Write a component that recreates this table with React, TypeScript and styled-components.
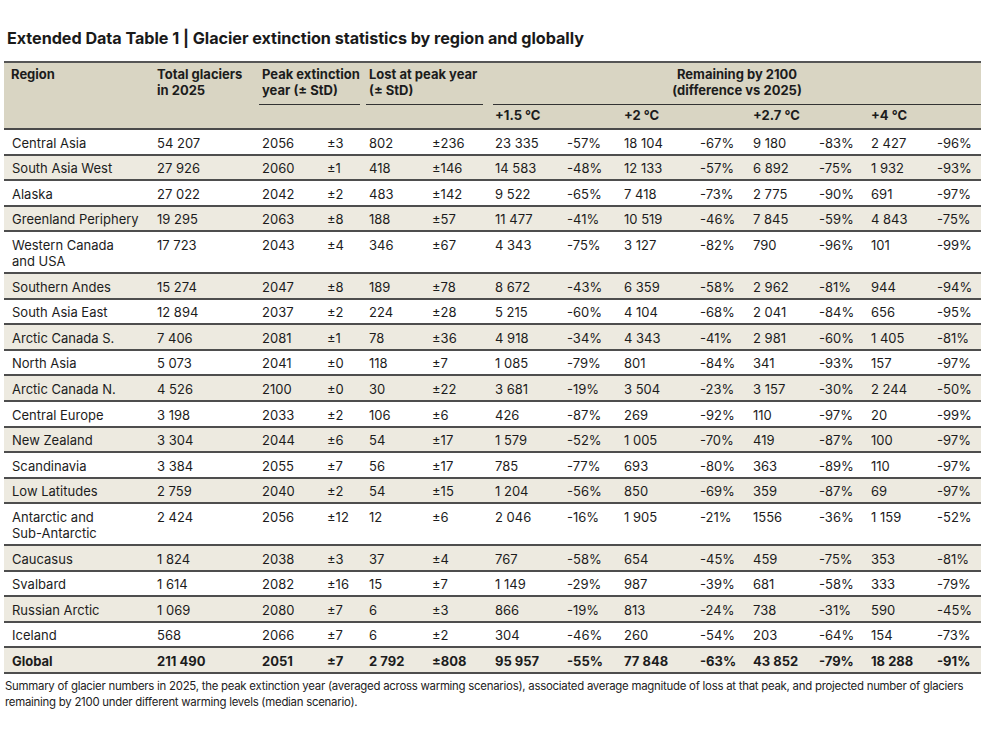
import React from "react";
import styled, { createGlobalStyle } from "styled-components";

const Global = createGlobalStyle`
  html, body { margin: 0; padding: 0; background: #ffffff; }
  body { font-family: Inter, "Noto Sans", Arial, sans-serif; color: #1c1c1c; }
`;

const Page = styled.div`
  width: 986px;
  padding: 28px 5px 0 4px;
  box-sizing: border-box;
`;

const Title = styled.h1`
  margin: 0 0 13px 3px;
  font-size: 16.2px;
  line-height: 20px;
  font-weight: 700;
  letter-spacing: -0.05px;
  color: #1a1a1a;
`;

const Table = styled.table`
  width: 977px;
  table-layout: fixed;
  border-collapse: collapse;
  font-size: 13px;
  line-height: 16px;
  border-top: 2px solid #555;
`;

const Head = styled.thead`
  background: #d9d5c3;
`;

const HeadRow = styled.tr<{ $last?: boolean }>`
  border-bottom: ${(p) => (p.$last ? "2px solid #4a4a4a" : "none")};
`;

const Th = styled.th<{ $center?: boolean }>`
  vertical-align: top;
  text-align: ${(p) => (p.$center ? "center" : "left")};
  font-weight: 700;
  padding: 3px 7px 0;
`;

const GroupTh = styled.th<{ $l: number; $r: number }>`
  vertical-align: top;
  padding: 0 ${(p) => p.$r}px 0 ${(p) => p.$l}px;
  font-weight: 700;
`;

const GroupLabel = styled.div<{ $center?: boolean }>`
  text-align: ${(p) => (p.$center ? "center" : "left")};
  padding: 3px 0 6px ${(p) => (p.$center ? 0 : 3)}px;
  border-bottom: 1px solid #333;
`;

const SubTh = styled.th`
  text-align: left;
  font-weight: 700;
  padding: 2px 7px 5px;
`;

const Row = styled.tr<{ $alt: boolean; $bold?: boolean }>`
  background: ${(p) => (p.$alt ? "#edeae0" : "#ffffff")};
  border-bottom: 2px solid #4e4e4e;
  font-weight: ${(p) => (p.$bold ? 700 : 400)};
`;

const Td = styled.td`
  vertical-align: top;
  padding: 4.6px 7px 3px;
  white-space: nowrap;
`;

const RegionTd = styled(Td)`
  white-space: pre-line;
  padding-left: 8px;
`;

const Caption = styled.p`
  margin: 4px 0 0 1px;
  font-size: 11.4px;
  letter-spacing: -0.25px;
  line-height: 16px;
  color: #222;
  white-space: nowrap;
`;

type R = string[];

const rows: R[] = [
  ["Central Asia", "54 207", "2056", "±3", "802", "±236", "23 335", "-57%", "18 104", "-67%", "9 180", "-83%", "2 427", "-96%"],
  ["South Asia West", "27 926", "2060", "±1", "418", "±146", "14 583", "-48%", "12 133", "-57%", "6 892", "-75%", "1 932", "-93%"],
  ["Alaska", "27 022", "2042", "±2", "483", "±142", "9 522", "-65%", "7 418", "-73%", "2 775", "-90%", "691", "-97%"],
  ["Greenland Periphery", "19 295", "2063", "±8", "188", "±57", "11 477", "-41%", "10 519", "-46%", "7 845", "-59%", "4 843", "-75%"],
  ["Western Canada\nand USA", "17 723", "2043", "±4", "346", "±67", "4 343", "-75%", "3 127", "-82%", "790", "-96%", "101", "-99%"],
  ["Southern Andes", "15 274", "2047", "±8", "189", "±78", "8 672", "-43%", "6 359", "-58%", "2 962", "-81%", "944", "-94%"],
  ["South Asia East", "12 894", "2037", "±2", "224", "±28", "5 215", "-60%", "4 104", "-68%", "2 041", "-84%", "656", "-95%"],
  ["Arctic Canada S.", "7 406", "2081", "±1", "78", "±36", "4 918", "-34%", "4 343", "-41%", "2 981", "-60%", "1 405", "-81%"],
  ["North Asia", "5 073", "2041", "±0", "118", "±7", "1 085", "-79%", "801", "-84%", "341", "-93%", "157", "-97%"],
  ["Arctic Canada N.", "4 526", "2100", "±0", "30", "±22", "3 681", "-19%", "3 504", "-23%", "3 157", "-30%", "2 244", "-50%"],
  ["Central Europe", "3 198", "2033", "±2", "106", "±6", "426", "-87%", "269", "-92%", "110", "-97%", "20", "-99%"],
  ["New Zealand", "3 304", "2044", "±6", "54", "±17", "1 579", "-52%", "1 005", "-70%", "419", "-87%", "100", "-97%"],
  ["Scandinavia", "3 384", "2055", "±7", "56", "±17", "785", "-77%", "693", "-80%", "363", "-89%", "110", "-97%"],
  ["Low Latitudes", "2 759", "2040", "±2", "54", "±15", "1 204", "-56%", "850", "-69%", "359", "-87%", "69", "-97%"],
  ["Antarctic and\nSub-Antarctic", "2 424", "2056", "±12", "12", "±6", "2 046", "-16%", "1 905", "-21%", "1556", "-36%", "1 159", "-52%"],
  ["Caucasus", "1 824", "2038", "±3", "37", "±4", "767", "-58%", "654", "-45%", "459", "-75%", "353", "-81%"],
  ["Svalbard", "1 614", "2082", "±16", "15", "±7", "1 149", "-29%", "987", "-39%", "681", "-58%", "333", "-79%"],
  ["Russian Arctic", "1 069", "2080", "±7", "6", "±3", "866", "-19%", "813", "-24%", "738", "-31%", "590", "-45%"],
  ["Iceland", "568", "2066", "±7", "6", "±2", "304", "-46%", "260", "-54%", "203", "-64%", "154", "-73%"],
  ["Global", "211 490", "2051", "±7", "2 792", "±808", "95 957", "-55%", "77 848", "-63%", "43 852", "-79%", "18 288", "-91%"],
];

const widths = [146, 105, 65, 42, 63, 63, 72, 57, 76, 53, 66, 52, 66, 51];

export default function App() {
  return (
    <Page>
      <Global />
      <Title>Extended Data Table 1 | Glacier extinction statistics by region and globally</Title>
      <Table>
        <colgroup>
          {widths.map((w, i) => (
            <col key={i} style={{ width: w }} />
          ))}
        </colgroup>
        <Head>
          <tr>
            <Th rowSpan={2}>Region</Th>
            <Th rowSpan={2}>
              Total glaciers
              <br />
              in 2025
            </Th>
            <GroupTh colSpan={2} $l={4} $r={2}>
              <GroupLabel>
                Peak extinction
                <br />
                year (± StD)
              </GroupLabel>
            </GroupTh>
            <GroupTh colSpan={2} $l={4} $r={5}>
              <GroupLabel>
                Lost at peak year
                <br />
                (± StD)
              </GroupLabel>
            </GroupTh>
            <GroupTh colSpan={8} $l={5} $r={0}>
              <GroupLabel $center>
                Remaining by 2100
                <br />
                (difference vs 2025)
              </GroupLabel>
            </GroupTh>
          </tr>
          <HeadRow $last>
            <SubTh colSpan={2} />
            <SubTh colSpan={2} />
            <SubTh colSpan={2}>+1.5 °C</SubTh>
            <SubTh colSpan={2}>+2 °C</SubTh>
            <SubTh colSpan={2}>+2.7 °C</SubTh>
            <SubTh colSpan={2}>+4 °C</SubTh>
          </HeadRow>
        </Head>
        <tbody>
          {rows.map((r, i) => (
            <Row key={r[0]} $alt={i % 2 === 1} $bold={r[0] === "Global"}>
              <RegionTd>{r[0]}</RegionTd>
              {r.slice(1).map((c, j) => (
                <Td key={j}>{c}</Td>
              ))}
            </Row>
          ))}
        </tbody>
      </Table>
      <Caption>
        Summary of glacier numbers in 2025, the peak extinction year (averaged across warming scenarios), associated
        average magnitude of loss at that peak, and projected number of glaciers
        <br />
        remaining by 2100 under different warming levels (median scenario).
      </Caption>
    </Page>
  );
}
